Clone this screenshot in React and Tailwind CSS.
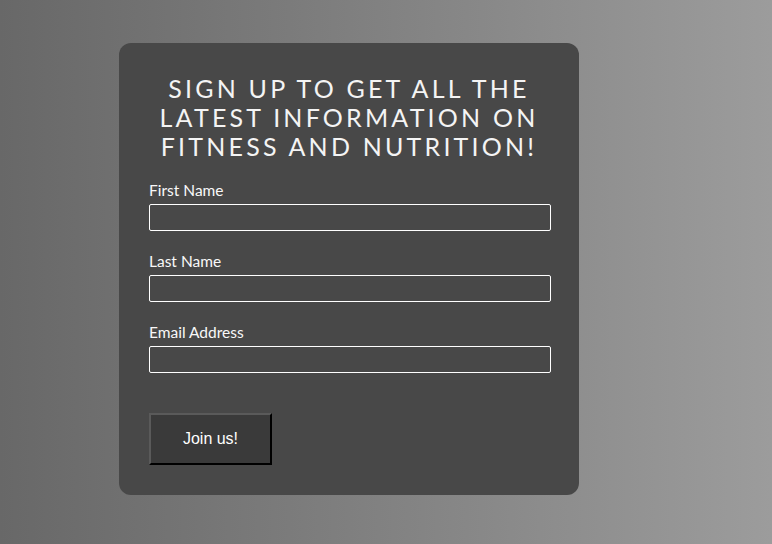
import React from "react";

const Field = ({ label, type = "text", first }) => (
  <div className={first ? "mt-[20px]" : "mt-[21px]"}>
    <label className="block text-[15.5px] leading-[18px] text-[#f8f8f8]">{label}</label>
    <input
      type={type}
      className="mt-[5px] block h-[27px] w-[402px] rounded-[2px] border border-white bg-transparent px-2 text-white outline-none"
    />
  </div>
);

const App = () => {
  return (
    <div className="h-[544px] w-full overflow-hidden bg-gradient-to-r from-[#686868] to-[#9c9c9c] pl-[119px] pt-[43px] font-['Lato',sans-serif]">
      <form className="w-[460px] rounded-[12px] bg-[#484848] px-[30px] pt-[31px] pb-[30px]">
        {/* Heading */}
        <h2 className="text-center text-[25px] leading-[29px] tracking-[3.2px] uppercase text-[#f4f4f4]">
          Sign up to get all the latest information on fitness and nutrition!
        </h2>

        {/* Fields */}
        <Field label="First Name" first />
        <Field label="Last Name" />
        <Field label="Email Address" type="email" />

        {/* Submit */}
        <button
          type="button"
          className="mt-[40px] h-[52px] w-[123px] border-2 border-t-[#5a5a5a] border-l-[#5a5a5a] border-b-black border-r-black bg-[#3a3a3a] font-['Liberation_Sans',Arial,sans-serif] text-[16px] text-white"
        >
          Join us!
        </button>
      </form>
    </div>
  );
};

export default App;
